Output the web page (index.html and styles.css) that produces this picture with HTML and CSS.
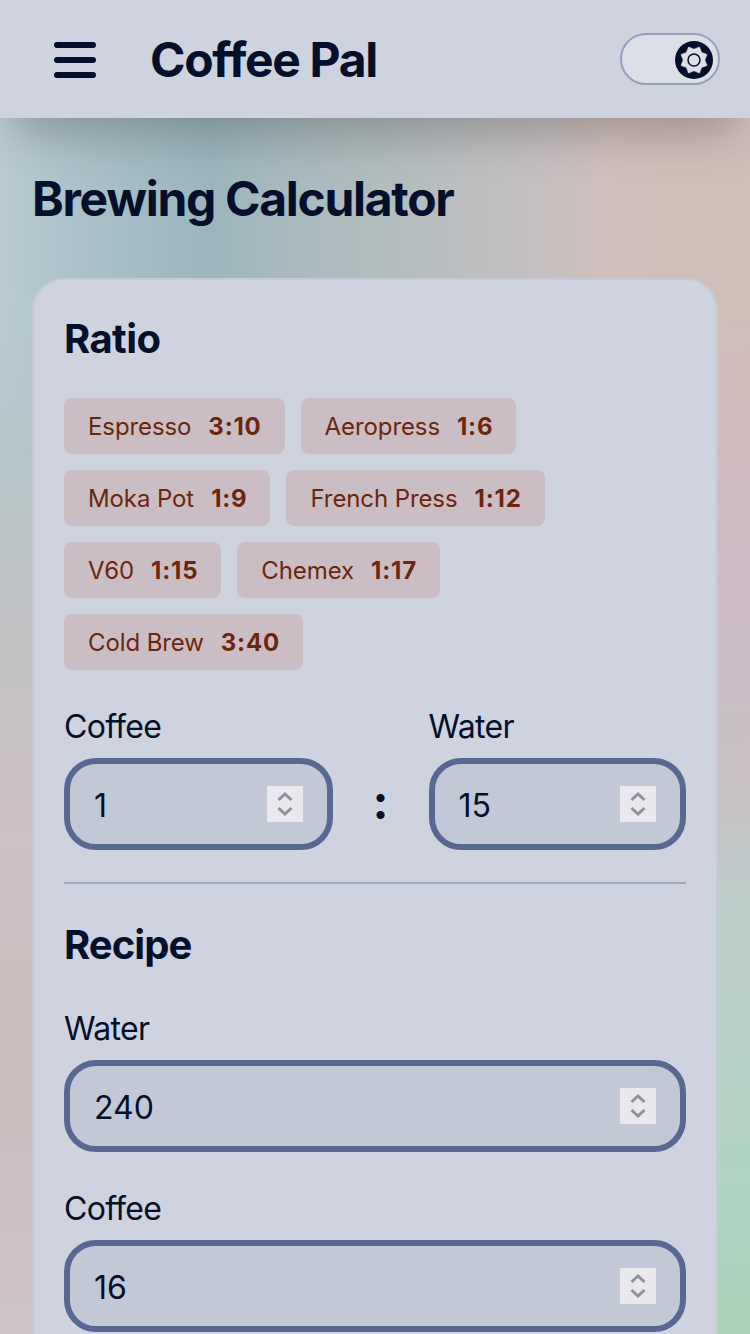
FILE: index.html
```html
<!DOCTYPE html>
<html lang="en">
<head>
<meta charset="utf-8">
<title>Coffee Pal</title>
<link rel="stylesheet" href="styles.css">
</head>
<body>
<div class="page">
  <header class="header">
    <button class="menu" aria-label="Menu">
      <svg width="42" height="36" viewBox="0 0 42 36" fill="none" stroke="currentColor" stroke-width="6" stroke-linecap="round"><path d="M3 3H39M3 18H39M3 33H39"/></svg>
    </button>
    <span class="brand">Coffee Pal</span>
    <button class="theme" aria-label="Theme">
      <svg width="38" height="38" viewBox="-19 -19 38 38">
        <circle r="19" fill="#04102b"/>
        <path fill="#dcdfe8" stroke="#dcdfe8" stroke-width=".6" stroke-linejoin="round" d="M0-10.8 5.4-13 7.6-7.6 13-5.4 10.8 0 13 5.4 7.6 7.6 5.4 13 0 10.8-5.4 13-7.6 7.6-13 5.4-10.8 0-13-5.4-7.6-7.6-5.4-13Z"/>
        <circle r="6" fill="none" stroke="#04102b" stroke-width="1.5"/>
      </svg>
    </button>
  </header>
  <main class="main">
    <h1 class="title">Brewing Calculator</h1>
    <section class="card">
      <h2 class="heading">Ratio</h2>
      <div class="chips">
        <button class="chip">Espresso <b>3:10</b></button>
        <button class="chip">Aeropress <b>1:6</b></button>
        <button class="chip">Moka Pot <b>1:9</b></button>
        <button class="chip">French Press <b>1:12</b></button>
        <button class="chip">V60 <b>1:15</b></button>
        <button class="chip">Chemex <b>1:17</b></button>
        <button class="chip">Cold Brew <b>3:40</b></button>
      </div>
      <div class="ratio">
        <div class="field">
          <span class="label">Coffee</span>
          <div class="input"><span>1</span><svg class="spin" viewBox="0 0 36 36"><path d="M11.5 14 18 8 24.5 14M11.5 22 18 28 24.5 22"/></svg></div>
        </div>
        <span class="colon">:</span>
        <div class="field">
          <span class="label">Water</span>
          <div class="input"><span>15</span><svg class="spin" viewBox="0 0 36 36"><path d="M11.5 14 18 8 24.5 14M11.5 22 18 28 24.5 22"/></svg></div>
        </div>
      </div>
      <hr class="rule">
      <h2 class="heading recipe-heading">Recipe</h2>
      <div class="recipe">
        <div class="field">
          <span class="label">Water</span>
          <div class="input"><span>240</span><svg class="spin" viewBox="0 0 36 36"><path d="M11.5 14 18 8 24.5 14M11.5 22 18 28 24.5 22"/></svg></div>
        </div>
        <div class="field">
          <span class="label">Coffee</span>
          <div class="input"><span>16</span><svg class="spin" viewBox="0 0 36 36"><path d="M11.5 14 18 8 24.5 14M11.5 22 18 28 24.5 22"/></svg></div>
        </div>
      </div>
    </section>
  </main>
</div>
</body>
</html>
```
FILE: styles.css
```css
* { box-sizing: border-box; margin: 0; }
body { font-family: Inter, "Liberation Sans", sans-serif; color: #04102b; }
button { border: 0; padding: 0; background: none; font: inherit; color: inherit; }

.page {
  position: relative;
  height: 1334px;
  overflow: hidden;
  background:
    linear-gradient(#b8cad1 240px, #b5c6c9 450px, #c2c2c4 640px, #cfc0c4 850px, #cbbcbd 1060px, #cfc4c9 1334px) left / 50% 100% no-repeat,
    linear-gradient(#d1beb5 200px, #d3bcba 320px, #cfbac5 560px, #c9c0c5 780px, #bccdca 900px, #b8d1c7 1040px, #aed4c2 1220px, #a8d3b6 1334px) right / 50% 100% no-repeat;
}
/* Upper band of the backdrop, fading out into the side gradients */
.page::before {
  content: "";
  position: absolute;
  inset: 0 0 auto;
  height: 460px;
  background: linear-gradient(90deg, #b9cbd3, #a9c0c8 12%, #9bb5bd 28%, #a7b9bf 38%, #b1bcbd 50%, #bcbec0 62%, #c5bfc1 72%, #d0bfbd 80%, #d1beb9 90%, #d0beb9);
  mask-image: linear-gradient(#000 290px, transparent);
}

.header {
  position: relative;
  display: flex;
  align-items: center;
  height: 118px;
  padding: 2px 30px 0 54px;
  background: #cfd3df;
  box-shadow: 0 25px 50px -12px rgba(0, 0, 0, .25);
}
.menu { display: flex; width: 96px; }
.brand { font-size: 48px; line-height: 56px; font-weight: 750; letter-spacing: -1.3px; }
.theme {
  display: flex;
  align-items: center;
  justify-content: flex-end;
  width: 100px;
  height: 52px;
  margin: -2px 0 0 auto;
  padding: 2px 5px 0 0;
  border: 2px solid #96a2bd;
  border-radius: 26px;
  background: #dcdfe8;
}

.main { position: relative; padding: 50px 32px 0; }
.title { height: 110px; font-size: 48px; line-height: 62px; font-weight: 750; letter-spacing: -1.3px; }
.card {
  height: 1200px;
  padding: 34px 30px;
  border: 2px solid #c5cad8;
  border-radius: 32px;
  background: #cfd3df;
}
.heading { font-size: 40px; line-height: 50px; font-weight: 750; letter-spacing: -.6px; }
.recipe-heading { letter-spacing: -.95px; }
.chips { display: flex; flex-wrap: wrap; gap: 16px; padding-right: 100px; margin: 34px 0 32px; }
.chip {
  display: flex;
  align-items: center;
  gap: 17px;
  height: 56px;
  padding: 0 23px 0 24px;
  border-radius: 8px;
  background: #cabec4;
  color: #6c260d;
  font-size: 24px;
  letter-spacing: -.1px;
}
.chip b { font-weight: 750; letter-spacing: .8px; }
.ratio { display: grid; grid-template-columns: 268.5px 96px 257.5px; }
.label { display: block; height: 56px; font-size: 32px; line-height: 50px; letter-spacing: -.7px; }
.input {
  display: flex;
  align-items: center;
  justify-content: space-between;
  height: 92px;
  padding: 2px 24px 0;
  border: 6px solid #586892;
  border-radius: 32px;
  background: #c3c8d6;
  font-size: 32px;
}
.spin { width: 36px; height: 36px; margin-top: -2px; background: #e9e9ed; fill: none; stroke: #9091a0; stroke-width: 3; }
.colon { padding-top: 76px; font-size: 48px; line-height: 48px; font-weight: 700; text-align: center; }
.rule { height: 2px; margin: 32px 0 36px; border: 0; background: #a0a8c1; }
.recipe { display: grid; gap: 32px; margin-top: 34px; }
```
